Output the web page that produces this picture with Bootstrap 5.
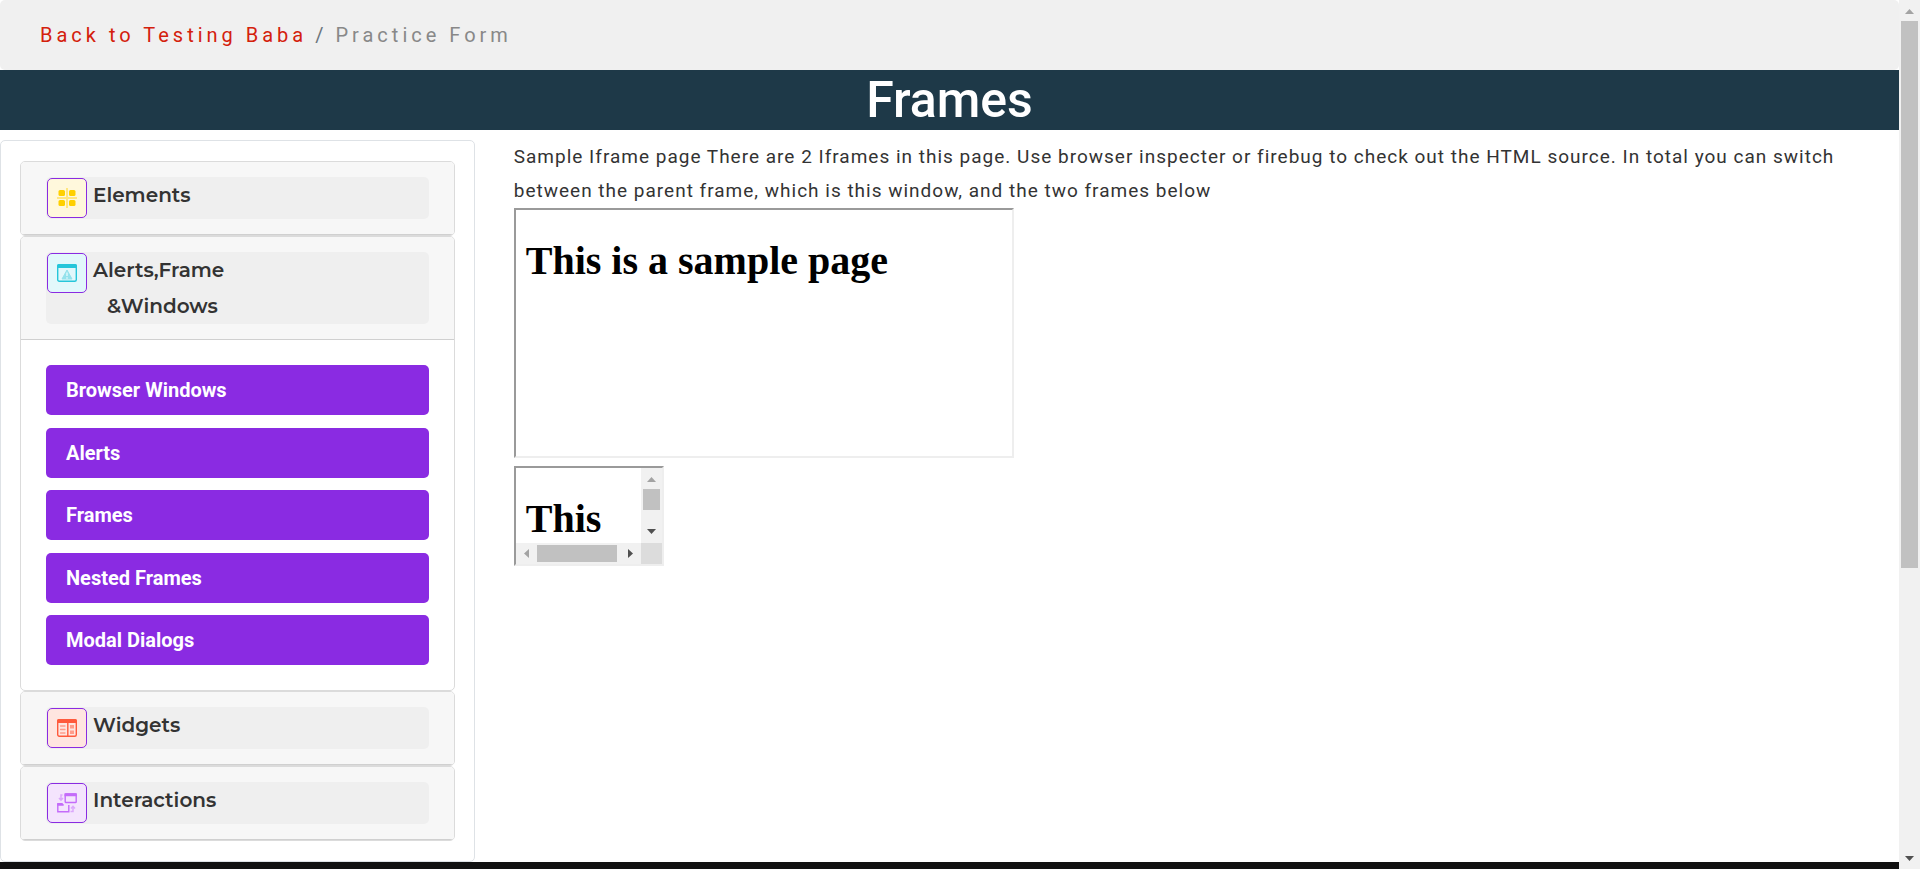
<!DOCTYPE html>
<html lang="en">
<head>
<meta charset="utf-8">
<meta name="viewport" content="width=device-width, initial-scale=1">
<title>Frames</title>
<link href="https://cdn.jsdelivr.net/npm/bootstrap@5.3.0/dist/css/bootstrap.min.css" rel="stylesheet">
<style>
  body { font-family: Roboto, "Liberation Sans", sans-serif; font-size: 20px; color: #333; background: #fff; }
  .crumb-bar { background: #f0f0f0; padding: 20px 40px; border-radius: 5px; font-size: 20px; line-height: 30px; letter-spacing: 4px; color: #6c757d; }
  .crumb-bar a { color: #d4200c; text-decoration: none; }
  .crumb-bar .breadcrumb-item + .breadcrumb-item { padding-left: 8px; color: #888; }
  .crumb-bar .breadcrumb-item + .breadcrumb-item::before { padding-right: 8px; color: #6c757d; }
  .page-title { background: #1e3948; color: #fff; font-size: 50px; line-height: 60px; font-weight: 500; }
  .side-column { padding-top: 10px; }
  .side-panel { border: 1px solid #dee2e6; border-radius: 5px; padding: 20px 19px; }
  .menu-group { border: 1px solid #dbdbdb; border-radius: 5px; overflow: hidden; }
  .menu-head { background: #f7f7f7; border-bottom: 1px solid #d0d0d0; padding: 15px 25px; }
  .menu-toggle { background: #efefef; border: 0; border-radius: 5px; padding: 0; min-height: 42px; color: #333; font-family: Montserrat, Inter, sans-serif; font-size: 20px; font-weight: 600; line-height: 36px; }
  .menu-icon { width: 40px; height: 40px; margin: 1px 6px 1px 1px; border: 1px solid #8a2be2; border-radius: 5px; }
  .second-line { padding-left: 14px; }
  .menu-body { padding: 25px; }
  .menu-links { min-height: 300px; }
  .menu-link { background: #8a2be2; color: #fff; border: 0; border-radius: 5px; padding: 10px 20px; font-size: 20px; line-height: 30px; font-weight: 700; }
  .menu-link:hover { background: #7420c4; color: #fff; }
  .intro { font-size: 19px; line-height: 34px; letter-spacing: 1px; }
  .content-area { padding: 10px 36px 10px 39px; }
  .sample-frame { border: 2px solid; border-color: #9a9a9a #eee #eee #9a9a9a; overflow: hidden; }
  .sample-frame h2 { font-family: "Liberation Serif", serif; font-size: 40px; line-height: 46px; font-weight: 700; color: #000; margin: 0; padding: 28px 10px; }
  .frame-large { width: 500px; height: 250px; }
  .frame-small { width: 150px; height: 100px; display: grid; grid-template-columns: minmax(0, 1fr) 21px; grid-template-rows: minmax(0, 1fr) 21px; }
  .bar-track { background: #f1f1f1; }
  .bar-thumb { background: #c1c1c1; }
  .thumb-tall { width: 17px; }
  .thumb-wide { height: 17px; }
  .bar-corner { background: #dcdcdc; }
  .bar-track svg { flex: none; }
  .page-foot { background: #111; }
  .page-bar { width: 21px; }
  .tint-yellow { background: #fff8dc; }
  .tint-cyan { background: #e2f8fb; }
  .tint-red { background: #ffe5e0; }
  .tint-violet { background: #f4e4fd; }
</style>
</head>
<body class="vh-100 d-flex overflow-hidden">
<div class="flex-fill d-flex flex-column overflow-hidden">
  <nav class="crumb-bar" aria-label="breadcrumb">
    <ol class="breadcrumb mb-0">
      <li class="breadcrumb-item"><a href="#">Back to Testing Baba</a></li>
      <li class="breadcrumb-item active" aria-current="page">Practice Form</li>
    </ol>
  </nav>
  <h1 class="page-title text-center mb-0">Frames</h1>
  <div class="row g-0 flex-shrink-0">
    <aside class="col-3 side-column">
      <div class="side-panel">
        <div class="menu-group">
          <div class="menu-head">
            <button class="menu-toggle d-flex w-100 text-start" type="button">
              <span class="menu-icon tint-yellow d-flex align-items-center justify-content-center flex-shrink-0">
                <svg width="20" height="20" viewBox="0 0 20 20"><path d="M10 0v20M0 10h20" stroke="#ffe680" stroke-width="2"/><g fill="#ffd000"><rect x="1.500" y="2" width="6.500" height="6" rx="1.500"/><rect x="12" y="2" width="6.500" height="6" rx="1.500"/><rect x="1.500" y="12" width="6.500" height="6" rx="1.500"/><rect x="12" y="12" width="6.500" height="6" rx="1.500"/></g></svg>
              </span>
              <span>Elements</span>
            </button>
          </div>
        </div>
        <div class="menu-group">
          <div class="menu-head">
            <button class="menu-toggle d-flex w-100 text-start" type="button" aria-expanded="true">
              <span class="menu-icon tint-cyan d-flex align-items-center justify-content-center flex-shrink-0">
                <svg width="20" height="20" viewBox="0 0 20 20"><rect x=".7" y="1.700" width="18.600" height="16.600" rx="1.500" fill="none" stroke="#26c6da" stroke-width="1.400"/><path d="M0 5V3q0-2 2-2h16q2 0 2 2v2z" fill="#26c6da"/><path d="M10 7l5 9h-10z" fill="#93e2ec" stroke="#93e2ec" stroke-linejoin="round"/><path d="M10 9.500v3.500M10 14.200v1.500" stroke="#e2f8fb" stroke-width="1.400"/></svg>
              </span>
              <span><span class="d-block">Alerts,Frame</span><span class="d-block second-line">&amp;Windows</span></span>
            </button>
          </div>
          <div class="menu-body">
            <div class="menu-links d-flex flex-column justify-content-between">
              <a class="btn menu-link text-start" href="#">Browser Windows</a>
              <a class="btn menu-link text-start" href="#">Alerts</a>
              <a class="btn menu-link text-start" href="#">Frames</a>
              <a class="btn menu-link text-start" href="#">Nested Frames</a>
              <a class="btn menu-link text-start" href="#">Modal Dialogs</a>
            </div>
          </div>
        </div>
        <div class="menu-group">
          <div class="menu-head">
            <button class="menu-toggle d-flex w-100 text-start" type="button">
              <span class="menu-icon tint-red d-flex align-items-center justify-content-center flex-shrink-0">
                <svg width="20" height="20" viewBox="0 0 20 20"><rect x=".7" y="1.700" width="18.600" height="16.600" rx="1.500" fill="none" stroke="#ff5a3c" stroke-width="1.400"/><path d="M0 5V3q0-2 2-2h16q2 0 2 2v2z" fill="#ff5a3c"/><path d="M10.800 4v14" stroke="#ff5a3c" stroke-width="1.400"/><path d="M3.500 8h4.500M3.500 11.500h4.500M3.500 15h4.500" stroke="#ff9c8a" stroke-width="1.300" stroke-linecap="round"/><path d="M13 7h4v3.500h-4zM13 12.500h4v3.500h-4z" fill="#ff9c8a"/></svg>
              </span>
              <span>Widgets</span>
            </button>
          </div>
        </div>
        <div class="menu-group">
          <div class="menu-head">
            <button class="menu-toggle d-flex w-100 text-start" type="button">
              <span class="menu-icon tint-violet d-flex align-items-center justify-content-center flex-shrink-0">
                <svg width="20" height="20" viewBox="0 0 20 20"><g fill="none" stroke="#c46bfa" stroke-width="1.400"><rect x="8.200" y="1" width="11" height="8.500" rx=".8"/><path d="M6.500 11.700H.8v7h11V12"/></g><path d="M7.500.3h12.300v2.900H7.500zM.1 10h5.400l1.300 2.500H.1z" fill="#c46bfa"/><g fill="none" stroke="#dba8fb" stroke-width="1.500"><path d="M5.500 2H4v4.500M2 5l2 2.200L6 5M13.500 18.500H16V14M14 15.500l2-2.200 2 2.200"/></g></svg>
              </span>
              <span>Interactions</span>
            </button>
          </div>
        </div>
      </div>
    </aside>
    <main class="col-9 content-area">
      <p class="intro mb-0">Sample Iframe page There are 2 Iframes in this page. Use browser inspecter or firebug to check out the HTML source. In total you can switch between the parent frame, which is this window, and the two frames below</p>
      <div class="sample-frame frame-large mb-2"><h2>This is a sample page</h2></div>
      <div class="sample-frame frame-small">
        <div class="overflow-hidden"><h2>This</h2></div>
        <div class="bar-track d-flex flex-column align-items-center">
          <svg width="21" height="21" viewBox="0 0 21 21"><path d="M6 14h9l-4.500-5z" fill="#a3a3a3"/></svg>
          <div class="bar-thumb thumb-tall flex-fill"></div>
          <svg width="21" height="33" viewBox="0 0 21 33"><path d="M6 19h9l-4.500 5z" fill="#505050"/></svg>
        </div>
        <div class="bar-track d-flex align-items-center">
          <svg width="21" height="21" viewBox="0 0 21 21"><path d="M13 6v9l-5-4.500z" fill="#a3a3a3"/></svg>
          <div class="bar-thumb thumb-wide flex-fill"></div>
          <svg width="24" height="21" viewBox="0 0 24 21"><path d="M11 6v9l5-4.500z" fill="#505050"/></svg>
        </div>
        <div class="bar-corner"></div>
      </div>
    </main>
  </div>
  <footer class="page-foot flex-fill"></footer>
</div>
<div class="page-bar bar-track d-flex flex-column align-items-center flex-shrink-0" aria-hidden="true">
  <svg width="21" height="21" viewBox="0 0 21 21"><path d="M6 14h9l-4.500-5z" fill="#a3a3a3"/></svg>
  <div class="flex-fill d-flex flex-column align-items-center w-100"><div class="bar-thumb thumb-tall" style="flex:547 0 0"></div><div style="flex:280 0 0"></div></div>
  <svg width="21" height="21" viewBox="0 0 21 21"><path d="M6 8h9l-4.500 5z" fill="#505050"/></svg>
</div>
<script src="https://cdn.jsdelivr.net/npm/bootstrap@5.3.0/dist/js/bootstrap.bundle.min.js"></script>
</body>
</html>
